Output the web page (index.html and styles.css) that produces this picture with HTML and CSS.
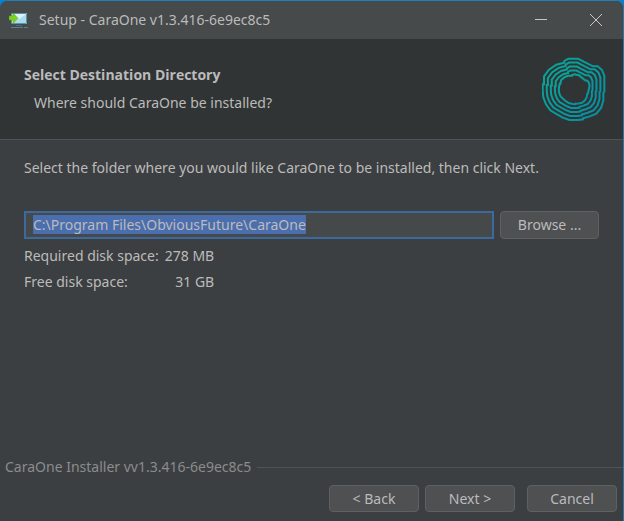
FILE: index.html
```html
<!DOCTYPE html>
<html lang="en">
<head>
<meta charset="utf-8">
<meta name="viewport" content="width=device-width, initial-scale=1">
<title>Setup - CaraOne v1.3.416-6e9ec8c5</title>
<link rel="stylesheet" href="styles.css">
</head>
<body>
<div class="window">
  <header class="titlebar">
    <svg class="app-icon" width="20" height="18" viewBox="0 0 20 18" aria-hidden="true">
      <path fill="#d9f2fb" d="M3 2h15v11H3z"/>
      <path fill="#a9dcef" d="M5 12 17 3v9z"/>
      <path fill="none" stroke="#5c93aa" d="M2.500 2.500h15v10h-15z"/>
      <path fill="#47697a" d="M7 14h6v1H7z"/>
      <path fill="#587f90" d="M2 16h12v1H2zM15 16h4v1h-4z"/>
      <path fill="#7ed321" stroke="#55a51c" stroke-width=".6" d="M0 5h4V2l5 5.500-5 5V9H0z"/>
    </svg>
    <span class="title">Setup - CaraOne v1.3.416-6e9ec8c5</span>
    <div class="window-controls">
      <button class="window-button" type="button" aria-label="Minimize"><svg width="14" height="14" viewBox="0 0 14 14"><path d="M1 6.500h12"/></svg></button>
      <button class="window-button" type="button" aria-label="Close"><svg width="14" height="14" viewBox="0 0 14 14"><path d="m1 1 12 12M13 1 1 13"/></svg></button>
    </div>
  </header>

  <section class="banner">
    <div>
      <h1 class="heading">Select Destination Directory</h1>
      <p class="subheading">Where should CaraOne be installed?</p>
    </div>
    <svg class="logo" width="64" height="64" viewBox="-96 -96 192 192" aria-hidden="true">
      <defs>
        <linearGradient id="teal" x1="0" y1="0" x2="1" y2="1"><stop offset="0" stop-color="#08a797"/><stop offset="1" stop-color="#058fa2"/></linearGradient>
        <path id="ring" vector-effect="non-scaling-stroke" d="M-29-84-17-91H12l17 9 28 14h14l13 11 7 18V8l-3 3v24l-7 22-14 17-20 8-20 6v3L12 93h-26l-21-8-21-12-15-9-13-18-8-21-2-20V-14h4v-24l15-20 22-15 24-6z"/>
      </defs>
      <g fill="none" stroke="url(#teal)" stroke-width="2">
        <use href="#ring"/>
        <use href="#ring" transform="scale(.87)"/>
        <use href="#ring" transform="scale(.74)"/>
        <use href="#ring" transform="scale(.61)"/>
        <use href="#ring" transform="rotate(12) scale(.48)"/>
      </g>
    </svg>
  </section>

  <main class="content">
    <label class="instruction" for="directory">Select the folder where you would like CaraOne to be installed, then click Next.</label>
    <div class="directory-row">
      <input class="directory" id="directory" type="text" value="C:\Program Files\ObviousFuture\CaraOne" spellcheck="false" autofocus>
      <button class="button browse" type="button">Browse ...</button>
    </div>
    <dl class="disk-space">
      <dt>Required disk space:</dt><dd>278 MB</dd>
      <dt>Free disk space:</dt><dd>31 GB</dd>
    </dl>
  </main>

  <footer class="footer">
    <div class="version">CaraOne Installer vv1.3.416-6e9ec8c5</div>
    <div class="actions">
      <button class="button" type="button">&lt; Back</button>
      <button class="button" type="button">Next &gt;</button>
      <button class="button cancel" type="button">Cancel</button>
    </div>
  </footer>
</div>
<script src="script.js"></script>
</body>
</html>
```
FILE: styles.css
```css
* { box-sizing: border-box; }

body {
  margin: 0;
  background: #087fd0;
  color: #bbbbbb;
  font: 14px/20px "Noto Sans", "Open Sans", sans-serif;
}

button, input { font: inherit; color: inherit; }

.window {
  display: flex;
  flex-direction: column;
  min-height: 100vh;
  border-top: 1px solid #217fb9;
  border-right: 1px solid #2877aa;
  border-radius: 8px 8px 0 0;
  background: #3c3f41;
  overflow: hidden;
}

.titlebar {
  display: flex;
  align-items: center;
  height: 38px;
  padding-left: 9px;
  background: #464a4b;
}

.app-icon { flex: none; margin-right: 10px; }

.window-controls { display: flex; margin-left: auto; }

.window-button {
  display: grid;
  place-items: center;
  width: 55px;
  height: 38px;
  padding: 0;
  border: 0;
  background: none;
}

.window-button svg { fill: none; stroke: #c8c8c8; }

.banner {
  display: flex;
  align-items: center;
  justify-content: space-between;
  height: 101px;
  padding: 0 17px 0 24px;
  border-bottom: 1px solid #515456;
  background: #313435;
}

.heading { margin: 0 0 8px; font-family: "Open Sans", "Noto Sans", sans-serif; font-size: 14px; font-weight: 700; }

.subheading { margin: 0 0 0 10px; }

.content { flex: 1; padding: 18px 24px; }

.instruction { display: block; }

.directory-row { display: flex; gap: 6px; margin-top: 33px; }

.directory {
  flex: 1;
  min-width: 0;
  height: 28px;
  padding: 0 7px 1px;
  border: 2px solid #3d6a9e;
  outline: 0;
  background: #45494a;
}

.directory::selection { background: #4b6eaf; color: #bbbbbb; }

.button {
  width: 90px;
  height: 27px;
  padding: 0;
  border: 1px solid #5e6162;
  border-radius: 4px;
  background: #4e5052;
}

.browse { width: 99px; height: 28px; }

.disk-space {
  display: grid;
  grid-template-columns: max-content max-content;
  gap: 6px;
  margin: 7px 0 0;
}

.disk-space dd { margin: 0; text-align: right; }

.footer { padding-bottom: 9px; }

.version {
  display: flex;
  align-items: center;
  gap: 6px;
  padding-left: 5px;
  color: #8a8c8d;
}

.version::after { content: ""; flex: 1; height: 1px; background: #505355; }

.actions {
  display: flex;
  justify-content: flex-end;
  gap: 6px;
  padding: 8px 6px 0;
}

.cancel { margin-left: 6px; }
```
FILE: script.js
```js
const directory = document.getElementById("directory");
directory.focus();
directory.select();
```
